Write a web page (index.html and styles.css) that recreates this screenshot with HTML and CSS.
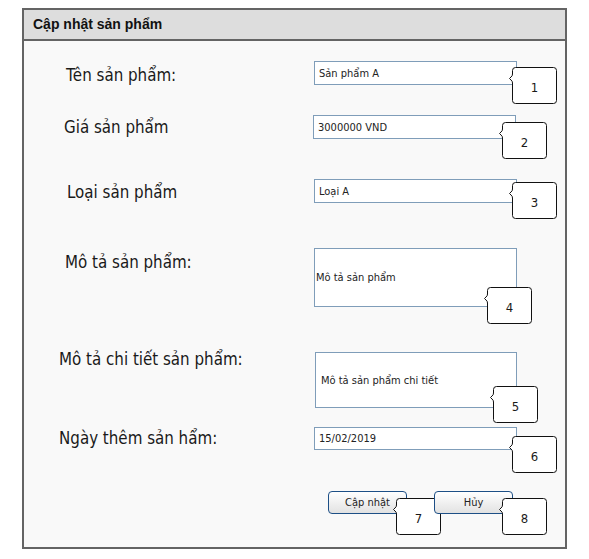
FILE: index.html
```html
<!DOCTYPE html>
<html lang="vi">
<head>
<meta charset="utf-8">
<title>Cập nhật sản phẩm</title>
<link rel="stylesheet" href="styles.css">
</head>
<body>
<div class="panel">
  <div class="panel-header">Cập nhật sản phẩm</div>
  <div class="panel-body">
    <div class="row row-1">
      <div class="label">Tên sản phẩm:</div>
      <div class="field">
        <div class="input">Sản phẩm A</div>
        <div class="callout callout-1">
          <svg class="callout-shape" width="50" height="38" viewBox="0 0 50 38"><path d="M7.5,0.5 H45.5 Q48.5,0.5 48.5,3.5 V33.5 Q48.5,36.5 45.5,36.5 H7.5 Q4.5,36.5 4.5,33.5 V16 Q4.5,14 3,13 L1.5,11.5 L3,10 Q4.5,9 4.5,7 V3.5 Q4.5,0.5 7.5,0.5 Z"/></svg>
          <span class="callout-num">1</span>
        </div>
      </div>
    </div>

    <div class="row row-2">
      <div class="label">Giá sản phẩm</div>
      <div class="field">
        <div class="input">3000000 VND</div>
        <div class="callout callout-2">
          <svg class="callout-shape" width="50" height="38" viewBox="0 0 50 38"><path d="M7.5,0.5 H45.5 Q48.5,0.5 48.5,3.5 V33.5 Q48.5,36.5 45.5,36.5 H7.5 Q4.5,36.5 4.5,33.5 V16 Q4.5,14 3,13 L1.5,11.5 L3,10 Q4.5,9 4.5,7 V3.5 Q4.5,0.5 7.5,0.5 Z"/></svg>
          <span class="callout-num">2</span>
        </div>
      </div>
    </div>

    <div class="row row-3">
      <div class="label">Loại sản phẩm</div>
      <div class="field">
        <div class="input">Loại A</div>
        <div class="callout callout-3">
          <svg class="callout-shape" width="50" height="38" viewBox="0 0 50 38"><path d="M7.5,0.5 H45.5 Q48.5,0.5 48.5,3.5 V33.5 Q48.5,36.5 45.5,36.5 H7.5 Q4.5,36.5 4.5,33.5 V16 Q4.5,14 3,13 L1.5,11.5 L3,10 Q4.5,9 4.5,7 V3.5 Q4.5,0.5 7.5,0.5 Z"/></svg>
          <span class="callout-num">3</span>
        </div>
      </div>
    </div>

    <div class="row row-4 row-top">
      <div class="label">Mô tả sản phẩm:</div>
      <div class="field">
        <div class="input textarea">Mô tả sản phẩm</div>
        <div class="callout callout-4">
          <svg class="callout-shape" width="50" height="38" viewBox="0 0 50 38"><path d="M7.5,0.5 H45.5 Q48.5,0.5 48.5,3.5 V33.5 Q48.5,36.5 45.5,36.5 H7.5 Q4.5,36.5 4.5,33.5 V16 Q4.5,14 3,13 L1.5,11.5 L3,10 Q4.5,9 4.5,7 V3.5 Q4.5,0.5 7.5,0.5 Z"/></svg>
          <span class="callout-num">4</span>
        </div>
      </div>
    </div>

    <div class="row row-5 row-top">
      <div class="label">Mô tả chi tiết sản phẩm:</div>
      <div class="field">
        <div class="input textarea">Mô tả sản phẩm chi tiết</div>
        <div class="callout callout-5">
          <svg class="callout-shape" width="50" height="38" viewBox="0 0 50 38"><path d="M7.5,0.5 H45.5 Q48.5,0.5 48.5,3.5 V33.5 Q48.5,36.5 45.5,36.5 H7.5 Q4.5,36.5 4.5,33.5 V16 Q4.5,14 3,13 L1.5,11.5 L3,10 Q4.5,9 4.5,7 V3.5 Q4.5,0.5 7.5,0.5 Z"/></svg>
          <span class="callout-num">5</span>
        </div>
      </div>
    </div>

    <div class="row row-6">
      <div class="label">Ngày thêm sản hẩm:</div>
      <div class="field">
        <div class="input">15/02/2019</div>
        <div class="callout callout-6">
          <svg class="callout-shape" width="50" height="38" viewBox="0 0 50 38"><path d="M7.5,0.5 H45.5 Q48.5,0.5 48.5,3.5 V33.5 Q48.5,36.5 45.5,36.5 H7.5 Q4.5,36.5 4.5,33.5 V16 Q4.5,14 3,13 L1.5,11.5 L3,10 Q4.5,9 4.5,7 V3.5 Q4.5,0.5 7.5,0.5 Z"/></svg>
          <span class="callout-num">6</span>
        </div>
      </div>
    </div>

    <div class="actions">
      <div class="btn">Cập nhật
        <div class="callout callout-btn">
          <svg class="callout-shape" width="50" height="38" viewBox="0 0 50 38"><path d="M7.5,0.5 H45.5 Q48.5,0.5 48.5,3.5 V33.5 Q48.5,36.5 45.5,36.5 H7.5 Q4.5,36.5 4.5,33.5 V16 Q4.5,14 3,13 L1.5,11.5 L3,10 Q4.5,9 4.5,7 V3.5 Q4.5,0.5 7.5,0.5 Z"/></svg>
          <span class="callout-num">7</span>
        </div>
      </div>
      <div class="btn">Hủy
        <div class="callout callout-btn">
          <svg class="callout-shape" width="50" height="38" viewBox="0 0 50 38"><path d="M7.5,0.5 H45.5 Q48.5,0.5 48.5,3.5 V33.5 Q48.5,36.5 45.5,36.5 H7.5 Q4.5,36.5 4.5,33.5 V16 Q4.5,14 3,13 L1.5,11.5 L3,10 Q4.5,9 4.5,7 V3.5 Q4.5,0.5 7.5,0.5 Z"/></svg>
          <span class="callout-num">8</span>
        </div>
      </div>
    </div>
  </div>
</div>
</body>
</html>
```

FILE: styles.css
```css
* { box-sizing: border-box; }

body {
  margin: 0;
  background: #ffffff;
  color: #1a1a1a;
  font-family: "DejaVu Sans Condensed", "DejaVu Sans", sans-serif;
}

.panel {
  margin: 8px 0 0 22px;
  width: 545px;
  height: 541px;
  border: 2px solid #646464;
  display: flex;
  flex-direction: column;
}

.panel-header {
  height: 31px;
  border-bottom: 2px solid #646464;
  background: #dddddd;
  padding-left: 9px;
  font-family: "Liberation Sans", Arial, sans-serif;
  font-weight: bold;
  font-size: 14px;
  line-height: 29px;
  color: #111;
}

.panel-body {
  flex: 1;
  background: #f9f9f9;
  padding-top: 20px;
}

.row {
  display: flex;
  align-items: center;
}

.row-top { align-items: flex-start; }

.row-2 { margin-top: 30px; }
.row-3 { margin-top: 40px; }
.row-4 { margin-top: 45px; }
.row-5 { margin-top: 45px; }
.row-6 { margin-top: 19px; }

.label {
  width: 290px;
  padding-left: 42px;
  font-size: 16.8px;
  line-height: 19px;
  color: #1a1a1a;
}

.row-1 .label { padding-top: 4px; }
.row-2 .label { padding-left: 40px; }
.row-3 .label { padding-left: 43px; padding-top: 2px; }
.row-4 .label { padding-left: 41px; margin-top: 5px; }
.row-5 .label { padding-left: 35px; margin-top: -2px; }
.row-6 .label { padding-left: 35px; }

.field {
  position: relative;
  width: 203px;
}

.row-2 .field { margin-left: -1px; }
.row-5 .field { margin-left: 1px; width: 202px; }

.input {
  height: 24px;
  border: 1px solid #7f9db9;
  background: #ffffff;
  font-size: 11px;
  padding-left: 4px;
  display: flex;
  align-items: center;
  color: #222;
}

.row-6 .input { height: 23px; }

.textarea { height: 59px; padding-left: 1px; }
.row-5 .textarea { height: 56px; padding-left: 5px; }

.callout {
  position: absolute;
  width: 50px;
  height: 38px;
}

.callout-shape {
  display: block;
  fill: #ffffff;
  stroke: #111111;
  stroke-width: 1;
}

.callout-num {
  position: absolute;
  left: 4px;
  top: 2px;
  width: 45px;
  height: 37px;
  display: flex;
  align-items: center;
  justify-content: center;
  font-size: 13px;
  color: #1a1a1a;
}

.callout-1 { left: 194px; top: 6px; }
.callout-2 { left: 185px; top: 7px; }
.callout-3 { left: 194px; top: 3px; }
.callout-4 { left: 169px; top: 39px; }
.callout-5 { left: 174px; top: 34px; }
.callout-6 { left: 194px; top: 9px; }

.actions {
  display: flex;
  gap: 27px;
  margin-top: 41px;
  padding-left: 304px;
}

.btn {
  position: relative;
  width: 79px;
  height: 23px;
  border: 1px solid #1d4f86;
  border-radius: 4px;
  background: linear-gradient(#ffffff, #e2e2e2);
  font-size: 11px;
  display: flex;
  align-items: center;
  justify-content: center;
  color: #222;
}

.callout-btn { left: 63px; top: 6px; }
```
